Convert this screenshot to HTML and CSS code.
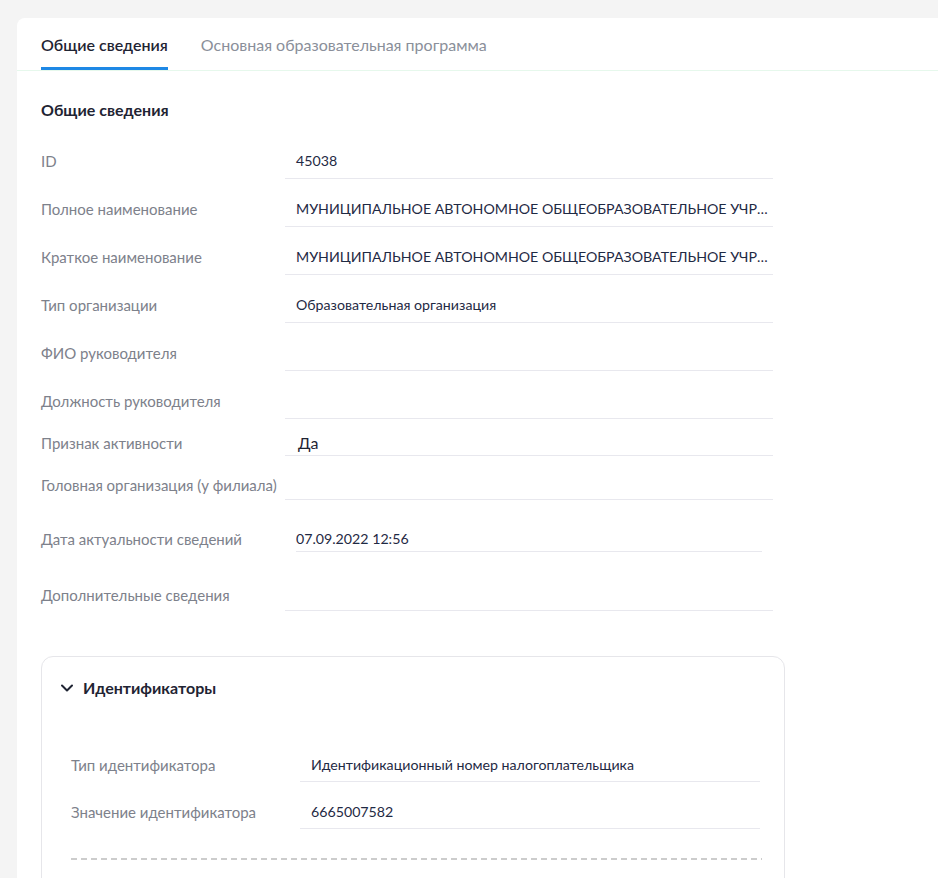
FILE: index.html
```html
<!DOCTYPE html>
<html lang="ru">
<head>
<meta charset="utf-8">
<link rel="stylesheet" href="styles.css">
</head>
<body>
<div class="page">
  <div class="card">
    <div class="tabs">
      <div class="tab active">Общие сведения</div>
      <div class="tab">Основная образовательная программа</div>
    </div>
    <div class="content">
      <div class="section-title">Общие сведения</div>
      <div class="fields">
        <div class="row r-std first"><div class="label">ID</div><div class="value">45038</div></div>
        <div class="row r-std"><div class="label">Полное наименование</div><div class="value">МУНИЦИПАЛЬНОЕ АВТОНОМНОЕ ОБЩЕОБРАЗОВАТЕЛЬНОЕ УЧРЕЖДЕНИЕ СРЕДНЯЯ ОБЩЕОБРАЗОВАТЕЛЬНАЯ ШКОЛА</div></div>
        <div class="row r-std"><div class="label">Краткое наименование</div><div class="value">МУНИЦИПАЛЬНОЕ АВТОНОМНОЕ ОБЩЕОБРАЗОВАТЕЛЬНОЕ УЧРЕЖДЕНИЕ СОШ</div></div>
        <div class="row r-std"><div class="label">Тип организации</div><div class="value">Образовательная организация</div></div>
        <div class="row r-std"><div class="label">ФИО руководителя</div><div class="value"></div></div>
        <div class="row r-std"><div class="label">Должность руководителя</div><div class="value"></div></div>
        <div class="row r-active"><div class="label">Признак активности</div><div class="value big">Да</div></div>
        <div class="row r-head"><div class="label">Головная организация (у филиала)</div><div class="value"></div></div>
        <div class="row r-date"><div class="label">Дата актуальности сведений</div><div class="value">07.09.2022 12:56</div></div>
        <div class="row r-extra"><div class="label">Дополнительные сведения</div><div class="value"></div></div>
      </div>

      <div class="panel">
        <div class="panel-head">
          <svg class="chevron" width="12" height="8" viewBox="0 0 12 8"><polyline points="1,1.5 6,6.5 11,1.5" fill="none" stroke="#1f2433" stroke-width="2" stroke-linecap="round" stroke-linejoin="round"/></svg>
          <span class="panel-title">Идентификаторы</span>
        </div>
        <div class="panel-body">
          <div class="row r-id first"><div class="label">Тип идентификатора</div><div class="value">Идентификационный номер налогоплательщика</div></div>
          <div class="row r-id"><div class="label">Значение идентификатора</div><div class="value">6665007582</div></div>
          <div class="dash"></div>
        </div>
      </div>
    </div>
  </div>
</div>
</body>
</html>
```

FILE: styles.css
```css
html, body {
  margin: 0;
  padding: 0;
  background: #f4f4f4;
  overflow: hidden;
  height: 100%;
}
body {
  font-family: Lato, "Noto Sans", "Liberation Sans", sans-serif;
  color: #1f2433;
}
.page {
  display: flex;
  padding: 18px 0 0 17px;
  margin-right: -30px;
  height: 100%;
  box-sizing: border-box;
}
.card {
  flex: 1;
  background: #fff;
  border-radius: 8px 8px 0 0;
}
.tabs {
  display: flex;
  gap: 33px;
  padding-left: 24px;
  border-bottom: 1px solid #e6f8ec;
}
.tab {
  font-size: 16px;
  line-height: 20px;
  padding: 17px 0 12px;
  border-bottom: 3px solid transparent;
  color: #8a8f9a;
}
.tab.active {
  color: #1f2433;
  font-weight: 600;
  border-bottom-color: #1e88e5;
}
.content {
  padding-left: 24px;
}
.section-title {
  margin-top: 29px;
  font-size: 16px;
  line-height: 20px;
  font-weight: 700;
  color: #1f2433;
}
.fields {
  margin-top: 23px;
}
.row {
  display: flex;
  --pt: 8px;
  --pb: 6px;
  --mt: 12px;
  margin-top: var(--mt);
}
.label {
  width: 244px;
  flex: none;
  font-size: 15px;
  line-height: 20px;
  padding-top: var(--pt);
  color: #7d818b;
  white-space: nowrap;
}
.value {
  width: 475px;
  flex: none;
  padding: var(--pt) 2px var(--pb) 11px;
  min-height: 20px;
  font-size: 14.2px;
  line-height: 20px;
  color: #1f2a44;
  border-bottom: 1px solid #e8e8ee;
  white-space: nowrap;
  overflow: hidden;
  text-overflow: ellipsis;
}
.r-std { --pt: 8px; --pb: 7px; }
.r-std.first { --mt: 12px; }
.r-active { --mt: 11px; --pt: 3px; --pb: 2px; }
.value.big {
  font-size: 16px;
  color: #1f2433;
  padding-left: 13px;
  width: 473px;
}
.r-head { --mt: 9px; --pt: 10px; --pb: 4px; }
.r-date { --mt: 29px; --pt: 0px; --pb: 2px; }
.r-date .value {
  margin-left: 11px;
  padding-left: 0;
  padding-right: 0;
  width: 466px;
}
.r-extra { --mt: 33px; --pt: 0px; --pb: 5px; }

.panel {
  margin-top: 45px;
  width: 742px;
  border: 1px solid #e6e6ea;
  border-radius: 12px;
  padding-bottom: 40px;
}
.panel-head {
  display: flex;
  align-items: center;
  gap: 10px;
  padding: 21px 0 0 19px;
  height: 20px;
  box-sizing: content-box;
}
.chevron {
  display: block;
}
.panel-title {
  font-size: 16px;
  line-height: 20px;
  font-weight: 700;
  color: #1f2433;
}
.panel-body {
  padding-left: 29px;
}
.panel-body .label {
  width: 229px;
}
.panel-body .value {
  width: 438px;
  padding-right: 11px;
}
.r-id { --pt: 8px; --pb: 6px; --mt: 12px; }
.r-id.first { --mt: 49px; }
.dash {
  margin-top: 29px;
  width: 691px;
  height: 2px;
  background: repeating-linear-gradient(90deg, #cccccc 0 6px, transparent 6px 10px);
}
```
